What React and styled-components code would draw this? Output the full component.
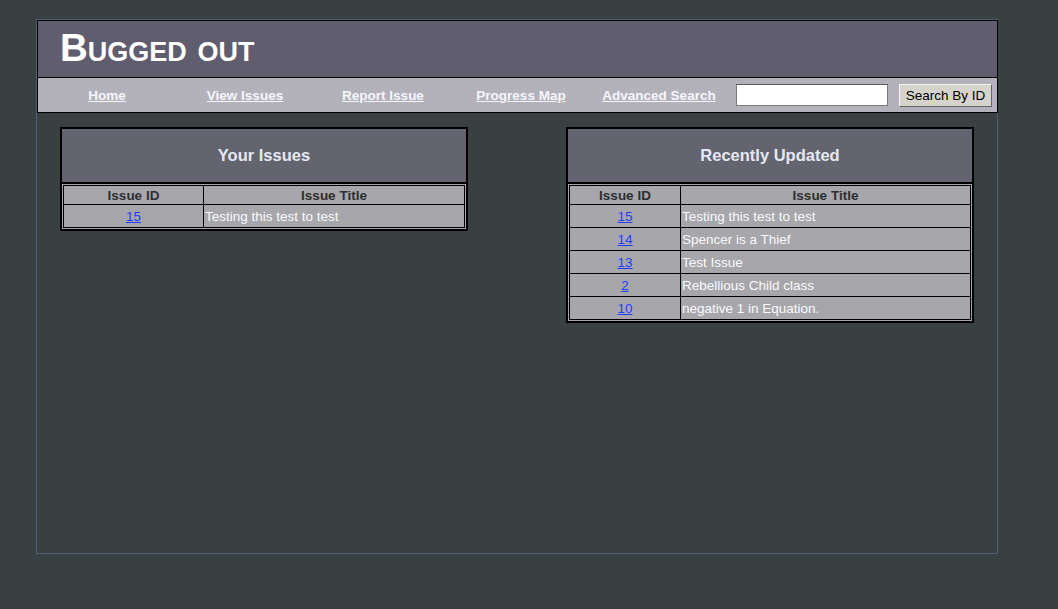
import React from "react";
import styled, { createGlobalStyle } from "styled-components";

const GlobalStyle = createGlobalStyle`
  html, body {
    margin: 0;
    padding: 0;
    background: #384042;
    font-family: "Liberation Sans", Arial, sans-serif;
  }
`;

const yourIssues = [{ id: 15, title: "Testing this test to test" }];

const recentIssues = [
  { id: 15, title: "Testing this test to test" },
  { id: 14, title: "Spencer is a Thief" },
  { id: 13, title: "Test Issue" },
  { id: 2, title: "Rebellious Child class" },
  { id: 10, title: "negative 1 in Equation." },
];

const navLinks = ["Home", "View Issues", "Report Issue", "Progress Map", "Advanced Search"];

function IssuePanel({ title, issues, idWidth }) {
  return (
    <Panel>
      <PanelTitle>{title}</PanelTitle>
      <TableWrap>
        <Table>
          <thead>
            <tr>
              <Th $width={idWidth}>Issue ID</Th>
              <Th>Issue Title</Th>
            </tr>
          </thead>
          <tbody>
            {issues.map((issue) => (
              <tr key={issue.id}>
                <Td $center>
                  <IdLink href="#">{issue.id}</IdLink>
                </Td>
                <Td>{issue.title}</Td>
              </tr>
            ))}
          </tbody>
        </Table>
      </TableWrap>
    </Panel>
  );
}

export default function App() {
  return (
    <>
      <GlobalStyle />
      <Page>
        <Header>
          <Logo>Bugged out</Logo>
        </Header>
        <Nav>
          {navLinks.map((link) => (
            <NavCell key={link}>
              <NavLink href="#">{link}</NavLink>
            </NavCell>
          ))}
          <SearchInput type="text" />
          <SearchButton>Search By ID</SearchButton>
        </Nav>
        <Content>
          <IssuePanel title="Your Issues" issues={yourIssues} idWidth={140} />
          <IssuePanel title="Recently Updated" issues={recentIssues} idWidth={111} />
        </Content>
      </Page>
    </>
  );
}

const Page = styled.div`
  margin: 19px 0 0 36px;
  width: 960px;
  height: 533px;
  border: 1px solid #4f5f6d;
  background: #384042;
`;

const Header = styled.div`
  box-sizing: border-box;
  width: calc(100% + 1px);
  height: 58px;
  border: 1px solid #000;
  background: #5f5d6e;
  display: flex;
  align-items: center;
  padding: 0 0 3px 22px;
`;

const Logo = styled.h1`
  margin: 0;
  font-size: 38.5px;
  font-weight: bold;
  font-variant: small-caps;
  color: #ffffff;
`;

const Nav = styled.div`
  box-sizing: border-box;
  width: calc(100% + 1px);
  display: flex;
  align-items: center;
  height: 35px;
  border: 1px solid #000;
  border-top: none;
  background: #b3b2ba;
`;

const NavCell = styled.div`
  width: 138px;
  text-align: center;
`;

const NavLink = styled.a`
  font-size: 13.5px;
  font-weight: bold;
  color: #f6f6fa;
  text-decoration: underline;
`;

const SearchInput = styled.input`
  box-sizing: border-box;
  margin-left: 8px;
  width: 152px;
  height: 22px;
  border: 1px solid #7a7a7a;
  border-top-color: #5a5a5a;
  background: #fff;
  padding: 1px 3px;
`;

const SearchButton = styled.button`
  box-sizing: border-box;
  margin-left: 11px;
  width: 93px;
  height: 23px;
  padding: 0;
  background: #d6d3cc;
  border: 1px solid;
  border-color: #f4f4f4 #666 #666 #f4f4f4;
  font-family: "Liberation Sans", Arial, sans-serif;
  font-size: 13.5px;
  color: #000;
`;

const Content = styled.div`
  display: flex;
  justify-content: space-between;
  align-items: flex-start;
  padding: 14px 23px 0 23px;
`;

const Panel = styled.div`
  width: 404px;
  border: 2px solid #000;
  background: #a6a6ab;
`;

const PanelTitle = styled.div`
  height: 53px;
  display: flex;
  align-items: center;
  justify-content: center;
  background: #646471;
  border-bottom: 2px solid #000;
  color: #e4e8f2;
  font-size: 16.5px;
  font-weight: bold;
`;

const TableWrap = styled.div`
  padding: 1px;
`;

const Table = styled.table`
  width: 100%;
  border-collapse: collapse;
  font-size: 13.5px;
`;

const Th = styled.th`
  box-sizing: border-box;
  height: 19px;
  width: ${(p) => (p.$width ? `${p.$width}px` : "auto")};
  padding: 0;
  border: 1px solid #000;
  color: #2e2e30;
  font-weight: bold;
  text-align: center;
`;

const Td = styled.td`
  box-sizing: border-box;
  height: 23px;
  padding: 0 1px;
  border: 1px solid #000;
  color: #fafafc;
  text-align: ${(p) => (p.$center ? "center" : "left")};
`;

const IdLink = styled.a`
  color: #1f3cff;
  text-decoration: underline;
`;
